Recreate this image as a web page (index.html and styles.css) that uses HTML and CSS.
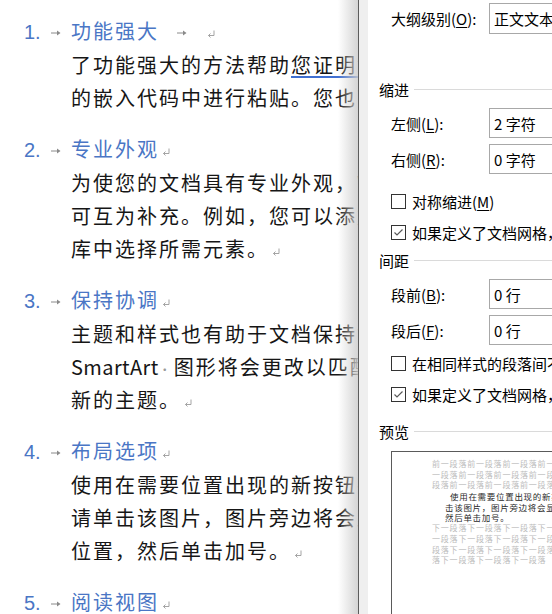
FILE: index.html
```html
<!DOCTYPE html>
<html lang="zh-CN">
<head>
<meta charset="utf-8">
<title>段落</title>
<link rel="stylesheet" href="styles.css">
</head>
<body>
<div class="screen">
  <div class="doc">
    <div class="para">
      <div class="head"><span class="num">1.</span><span class="tab"><svg class="arrow" width="10" height="6" viewBox="0 0 10 6"><path d="M0 3H8" stroke="#8a8a8a" stroke-width="1"/><path d="M6 0.5L9.5 3L6 5.5Z" fill="#8a8a8a"/></svg></span><span class="htext">功能强大</span><svg class="arrow arrow-after" width="10" height="6" viewBox="0 0 10 6"><path d="M0 3H8" stroke="#8a8a8a" stroke-width="1"/><path d="M6 0.5L9.5 3L6 5.5Z" fill="#8a8a8a"/></svg><svg class="pm pm-far" width="8" height="8" viewBox="0 0 8 8"><path d="M7 0.5V5.5H1.5M3.5 3.5L1.5 5.5L3.5 7.5" fill="none" stroke="#9a9a9a" stroke-width="0.9"/></svg></div>
      <div class="line">了功能强大的方法帮助<span class="gram">您证明您的观点</span>。当您单击联机视频时，</div>
      <div class="line">的嵌入代码中进行粘贴。您也可以键入一个关键字</div>
    </div>
    <div class="para">
      <div class="head"><span class="num">2.</span><span class="tab"><svg class="arrow" width="10" height="6" viewBox="0 0 10 6"><path d="M0 3H8" stroke="#8a8a8a" stroke-width="1"/><path d="M6 0.5L9.5 3L6 5.5Z" fill="#8a8a8a"/></svg></span><span class="htext">专业外观</span><svg class="pm" width="8" height="8" viewBox="0 0 8 8"><path d="M7 0.5V5.5H1.5M3.5 3.5L1.5 5.5L3.5 7.5" fill="none" stroke="#9a9a9a" stroke-width="0.9"/></svg></div>
      <div class="line">为使您的文档具有专业外观，Word 提供了页眉</div>
      <div class="line">可互为补充。例如，您可以添加匹配的封面</div>
      <div class="line">库中选择所需元素。<svg class="pm" width="8" height="8" viewBox="0 0 8 8"><path d="M7 0.5V5.5H1.5M3.5 3.5L1.5 5.5L3.5 7.5" fill="none" stroke="#9a9a9a" stroke-width="0.9"/></svg></div>
    </div>
    <div class="para">
      <div class="head"><span class="num">3.</span><span class="tab"><svg class="arrow" width="10" height="6" viewBox="0 0 10 6"><path d="M0 3H8" stroke="#8a8a8a" stroke-width="1"/><path d="M6 0.5L9.5 3L6 5.5Z" fill="#8a8a8a"/></svg></span><span class="htext">保持协调</span><svg class="pm" width="8" height="8" viewBox="0 0 8 8"><path d="M7 0.5V5.5H1.5M3.5 3.5L1.5 5.5L3.5 7.5" fill="none" stroke="#9a9a9a" stroke-width="0.9"/></svg></div>
      <div class="line">主题和样式也有助于文档保持协调。当您单击</div>
      <div class="line"><span class="latin">SmartArt</span><span class="space">·</span>图形将会更改以匹配新的主题。</div>
      <div class="line">新的主题。<svg class="pm" width="8" height="8" viewBox="0 0 8 8"><path d="M7 0.5V5.5H1.5M3.5 3.5L1.5 5.5L3.5 7.5" fill="none" stroke="#9a9a9a" stroke-width="0.9"/></svg></div>
    </div>
    <div class="para">
      <div class="head"><span class="num">4.</span><span class="tab"><svg class="arrow" width="10" height="6" viewBox="0 0 10 6"><path d="M0 3H8" stroke="#8a8a8a" stroke-width="1"/><path d="M6 0.5L9.5 3L6 5.5Z" fill="#8a8a8a"/></svg></span><span class="htext">布局选项</span><svg class="pm" width="8" height="8" viewBox="0 0 8 8"><path d="M7 0.5V5.5H1.5M3.5 3.5L1.5 5.5L3.5 7.5" fill="none" stroke="#9a9a9a" stroke-width="0.9"/></svg></div>
      <div class="line">使用在需要位置出现的新按钮在 Word 中</div>
      <div class="line">请单击该图片，图片旁边将会显示布局选项</div>
      <div class="line">位置，然后单击加号。<svg class="pm" width="8" height="8" viewBox="0 0 8 8"><path d="M7 0.5V5.5H1.5M3.5 3.5L1.5 5.5L3.5 7.5" fill="none" stroke="#9a9a9a" stroke-width="0.9"/></svg></div>
    </div>
    <div class="para">
      <div class="head"><span class="num">5.</span><span class="tab"><svg class="arrow" width="10" height="6" viewBox="0 0 10 6"><path d="M0 3H8" stroke="#8a8a8a" stroke-width="1"/><path d="M6 0.5L9.5 3L6 5.5Z" fill="#8a8a8a"/></svg></span><span class="htext">阅读视图</span><svg class="pm" width="8" height="8" viewBox="0 0 8 8"><path d="M7 0.5V5.5H1.5M3.5 3.5L1.5 5.5L3.5 7.5" fill="none" stroke="#9a9a9a" stroke-width="0.9"/></svg></div>
    </div>
  </div>

  <div class="dialog">
    <div class="edge"></div>
    <div class="panel">
      <div class="field field-outline">
        <span class="lbl">大纲级别(<u>O</u>):</span>
        <span class="box">正文文本</span>
      </div>

      <div class="sect sect-indent">缩进</div>
      <div class="field gap-9">
        <span class="lbl">左侧(<u>L</u>):</span>
        <span class="box">2 字符</span>
      </div>
      <div class="field gap-6">
        <span class="lbl">右侧(<u>R</u>):</span>
        <span class="box">0 字符</span>
      </div>
      <div class="check gap-17">
        <span class="cb"></span>
        <span>对称缩进(<u>M</u>)</span>
      </div>
      <div class="check gap-11">
        <span class="cb"><svg width="13" height="13" viewBox="0 0 13 13"><path d="M2.5 6.5L5 9L10.5 3.5" fill="none" stroke="#5a5a5a" stroke-width="1.2"/></svg></span>
        <span>如果定义了文档网格，则自动调整右缩进(<u>D</u>)</span>
      </div>

      <div class="sect gap-8">间距</div>
      <div class="field gap-9">
        <span class="lbl">段前(<u>B</u>):</span>
        <span class="box">0 行</span>
      </div>
      <div class="field gap-6">
        <span class="lbl">段后(<u>F</u>):</span>
        <span class="box">0 行</span>
      </div>
      <div class="check gap-8">
        <span class="cb"></span>
        <span>在相同样式的段落间不添加空格(<u>C</u>)</span>
      </div>
      <div class="check gap-11">
        <span class="cb"><svg width="13" height="13" viewBox="0 0 13 13"><path d="M2.5 6.5L5 9L10.5 3.5" fill="none" stroke="#5a5a5a" stroke-width="1.2"/></svg></span>
        <span>如果定义了文档网格，则对齐到网格(<u>W</u>)</span>
      </div>

      <div class="sect gap-17">预览</div>
      <div class="preview">
        <div class="pv-gray">前一段落前一段落前一段落前一段落前一段落</div>
        <div class="pv-gray">一段落前一段落前一段落前一段落前一段落前</div>
        <div class="pv-gray">段落前一段落前一段落前一段落前一段落前一</div>
        <div class="pv-text pv-first">使用在需要位置出现的新按钮在 Word 中保存时间。</div>
        <div class="pv-text">击该图片，图片旁边将会显示布局选项按钮。</div>
        <div class="pv-text">然后单击加号。</div>
        <div class="pv-gray">下一段落下一段落下一段落下一段落下一段落</div>
        <div class="pv-gray">一段落下一段落下一段落下一段落下一段落下</div>
        <div class="pv-gray">段落下一段落下一段落下一段落下一段落下一</div>
        <div class="pv-gray">落下一段落下一段落下一段落</div>
      </div>
    </div>
  </div>
</div>
</body>
</html>
```

FILE: styles.css
```css
html, body {
  margin: 0;
  padding: 0;
  background: #ffffff;
}

body {
  width: 552px;
  height: 614px;
  overflow: hidden;
  font-family: "Noto Sans CJK SC", "Noto Sans", sans-serif;
}

.screen {
  display: flex;
  height: 614px;
}

/* ---------- document ---------- */
.doc {
  position: relative;
  flex: none;
  width: 358px;
  height: 614px;
  overflow: hidden;
  box-sizing: border-box;
  padding-top: 14px;
  font-size: 20px;
  letter-spacing: 2px;
  color: #161616;
}

.doc::after {
  content: "";
  position: absolute;
  top: 0;
  right: 0;
  bottom: 0;
  width: 20px;
  background: linear-gradient(to right, rgba(220, 220, 220, 0), rgba(205, 205, 205, 0.85));
}

.para + .para {
  margin-top: 18px;
}

.head {
  height: 34px;
  line-height: 34px;
  padding-left: 24px;
  white-space: nowrap;
  color: #4a76c5;
}

.num {
  display: inline-block;
  width: 25px;
  font-family: "Liberation Sans", sans-serif;
  letter-spacing: 0;
  color: #4a76c5;
}

.tab {
  display: inline-block;
  width: 22px;
}

.arrow {
  vertical-align: middle;
  position: relative;
  top: -1px;
  left: 2px;
}

.arrow-after {
  margin-left: 16px;
}

.pm {
  vertical-align: middle;
  margin-left: 3px;
}

.pm-far {
  margin-left: 22px;
}

.line {
  height: 33px;
  line-height: 33px;
  padding-left: 71px;
  white-space: nowrap;
}

.gram {
  text-decoration: underline;
  text-decoration-color: #3f6fd1;
  text-decoration-thickness: 2px;
  text-underline-offset: 3px;
}

.latin {
  letter-spacing: 0.4px;
}

.space {
  display: inline-block;
  width: 15px;
  text-align: left;
  color: #9a9a9a;
  letter-spacing: 0;
  font-size: 12px;
}

/* ---------- dialog ---------- */
.dialog {
  flex: 1;
  display: flex;
  border-left: 1px solid #5c5c5c;
  min-width: 0;
}

.edge {
  flex: none;
  width: 9px;
  background: #efefef;
}

.panel {
  flex: 1;
  min-width: 0;
  overflow: hidden;
  background: #ffffff;
  font-size: 15px;
  color: #000000;
}

.panel u {
  text-underline-offset: 2px;
}

.field {
  display: flex;
  align-items: center;
  height: 30px;
  padding-left: 23px;
  white-space: nowrap;
}

.field-outline {
  margin-top: 3px;
  height: 31px;
}

.lbl {
  flex: none;
  width: 98px;
}

.box {
  flex: none;
  display: flex;
  align-items: center;
  box-sizing: border-box;
  width: 120px;
  height: 100%;
  padding-left: 4px;
  border: 1px solid #a8a8a8;
  white-space: nowrap;
  overflow: hidden;
}

.sect {
  display: flex;
  align-items: center;
  height: 20px;
  padding-left: 11px;
  white-space: nowrap;
}

.sect::after {
  content: "";
  flex: 1;
  height: 1px;
  margin-left: 5px;
  background: #dadada;
}

.sect-indent {
  margin-top: 45px;
}

.check {
  display: flex;
  align-items: center;
  height: 20px;
  padding-left: 23px;
  white-space: nowrap;
}

.cb {
  flex: none;
  display: flex;
  align-items: center;
  justify-content: center;
  box-sizing: border-box;
  width: 15px;
  height: 15px;
  margin-right: 6px;
  border: 1px solid #333333;
  background: #ffffff;
}

.gap-6 { margin-top: 6px; }
.gap-8 { margin-top: 8px; }
.gap-9 { margin-top: 9px; }
.gap-11 { margin-top: 11px; }
.gap-17 { margin-top: 17px; }

.preview {
  margin-top: 10px;
  margin-left: 23px;
  width: 220px;
  height: 200px;
  box-sizing: border-box;
  padding: 7px 0 0 40px;
  border: 1px solid #5a5a5a;
}

.pv-gray {
  height: 10.7px;
  line-height: 10.7px;
  font-size: 8px;
  letter-spacing: 0.8px;
  color: #bcbcbc;
  white-space: nowrap;
}

.pv-text {
  height: 10.7px;
  line-height: 10.7px;
  padding-left: 13px;
  font-size: 8.5px;
  letter-spacing: 0.7px;
  color: #2a2a2a;
  white-space: nowrap;
}

.pv-first {
  padding-left: 18px;
}
```
